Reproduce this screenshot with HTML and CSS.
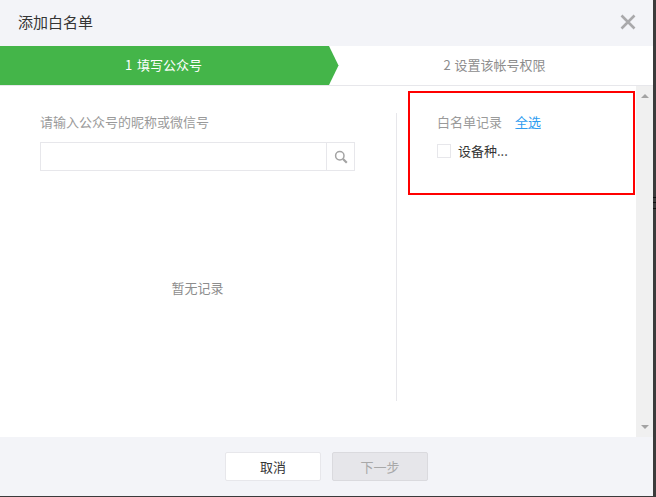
FILE: index.html
```html
<!DOCTYPE html>
<html lang="zh">
<head>
<meta charset="utf-8">
<title>添加白名单</title>
<link rel="stylesheet" href="styles.css">
</head>
<body>
<div class="dialog">
  <header class="head">
    <h1 class="title">添加白名单</h1>
    <svg class="close" width="16" height="16" viewBox="0 0 16 16"><path d="M1.5 1.5L14.5 14.5M14.5 1.5L1.5 14.5" stroke="#a9a9ab" stroke-width="2.6" fill="none"/></svg>
  </header>
  <div class="steps">
    <div class="step step-on">1 填写公众号
      <svg class="arrow" width="10" height="39" viewBox="0 0 10 39"><path d="M0 0L9.500 19.500L0 39Z" fill="#44b549"/></svg>
    </div>
    <div class="step step-off">2 设置该帐号权限</div>
  </div>
  <div class="content">
    <div class="body">
      <section class="left">
        <div class="label">请输入公众号的昵称或微信号</div>
        <div class="search">
          <div class="search-input"></div>
          <div class="search-btn">
            <svg width="14" height="14" viewBox="0 0 14 14"><circle cx="5.800" cy="5.800" r="4.200" stroke="#a3a3a3" stroke-width="1.500" fill="none"/><path d="M9 9L12.800 12.800" stroke="#a3a3a3" stroke-width="2.200"/></svg>
          </div>
        </div>
        <div class="empty">暂无记录</div>
      </section>
      <section class="right">
        <div class="right-head">
          <span class="label">白名单记录</span>
          <a class="all">全选</a>
        </div>
        <div class="check-row">
          <span class="check"></span>
          <span class="check-text">设备种...</span>
        </div>
      </section>
    </div>
    <div class="scroll">
      <span class="tri-up"></span>
      <span class="tri-down"></span>
    </div>
  </div>
  <footer class="foot">
    <div class="btn btn-default">取消</div>
    <div class="btn btn-disabled">下一步</div>
  </footer>
  <div class="highlight"></div>
</div>
<div class="edge-marks"></div>
</body>
</html>
```
FILE: styles.css
```css
* { box-sizing: border-box; }
html, body { margin: 0; height: 497px; overflow: hidden; }
body {
  position: relative;
  background: #3b3b3b;
  font-family: "Noto Sans CJK SC", "Liberation Sans", sans-serif;
  font-size: 13px;
}
.dialog {
  position: relative;
  width: 653px;
  height: 496px;
  background: #f3f4f8;
  display: flex;
  flex-direction: column;
}
.head {
  height: 46px;
  flex: none;
  display: flex;
  align-items: center;
  justify-content: space-between;
  padding: 0 18px 3px;
}
.title { margin: 0; font-size: 15px; font-weight: 400; color: #353535; }
.close { margin-right: -1px; margin-top: 1px; }
.steps {
  height: 40px;
  flex: none;
  display: flex;
  background: #fff;
  border-bottom: 1px solid #e7e7eb;
}
.step {
  flex: 1;
  height: 39px;
  padding-bottom: 2px;
  display: flex;
  align-items: center;
  justify-content: center;
  position: relative;
  word-spacing: 2px;
}
.step-on { background: #44b549; color: #fff; flex: 0 0 329px; padding-right: 2px; }
.step-off { color: #8d8d8d; padding-left: 7px; word-spacing: 1px; }
.arrow { position: absolute; left: 100%; top: 0; }
.content { flex: 1; display: flex; background: #fff; min-height: 0; }
.body { flex: 1; display: flex; padding: 27px 0 36px 40px; }
.left { width: 357px; flex: none; border-right: 1px solid #e7e7eb; padding-right: 41px; display: flex; flex-direction: column; }
.label { color: #9a9a9a; line-height: 20px; }
.left > .label { margin-top: -1px; }
.search { height: 29px; flex: none; margin-top: 10px; display: flex; border: 1px solid #e7e7eb; }
.search-input { flex: 1; }
.search-btn { width: 28px; border-left: 1px solid #e7e7eb; display: flex; align-items: center; justify-content: center; }
.empty { color: #8d8d8d; text-align: center; margin-top: 107px; line-height: 20px; }
.right { flex: 1; padding-left: 40px; }
.right-head { display: flex; gap: 13px; line-height: 20px; margin-top: -1px; }
.all { color: #2e9cf0; text-decoration: underline; text-decoration-color: #9ccdf5; }
.check-row { display: flex; align-items: flex-start; gap: 7px; margin-top: 9px; height: 20px; }
.check { width: 14px; height: 14px; margin-top: 3px; border: 1px solid #e7e7eb; background: #fff; }
.check-text { color: #353535; line-height: 20px; }
.scroll {
  width: 17px;
  flex: none;
  background: #f0f0f0;
  display: flex;
  flex-direction: column;
  justify-content: space-between;
  align-items: center;
  padding: 8px 0;
}
.tri-up, .tri-down { width: 0; height: 0; border-left: 4px solid transparent; border-right: 4px solid transparent; }
.tri-up { border-bottom: 4px solid #a3a3a3; }
.tri-down { border-top: 4px solid #a3a3a3; }
.foot {
  height: 59px;
  flex: none;
  display: flex;
  justify-content: center;
  gap: 11px;
  padding-top: 15px;
}
.btn {
  width: 96px;
  height: 29px;
  border-radius: 2px;
  display: flex;
  align-items: center;
  justify-content: center;
}
.btn-default { background: #fff; border: 1px solid #e7e7eb; color: #353535; }
.btn-disabled { background: #e6e6ea; border: 1px solid #dadade; color: #a8a8a8; }
.highlight {
  position: absolute;
  left: 408px;
  top: 91px;
  width: 227px;
  height: 104px;
  border: 2px solid #f00;
}
.edge-marks {
  position: absolute;
  left: 653px;
  top: 197px;
  width: 3px;
  height: 12px;
  border-top: 1px solid #111;
  border-bottom: 1px solid #111;
}
.edge-marks::before {
  content: "";
  display: block;
  height: 1px;
  margin-top: 4px;
  background: #111;
}
```
